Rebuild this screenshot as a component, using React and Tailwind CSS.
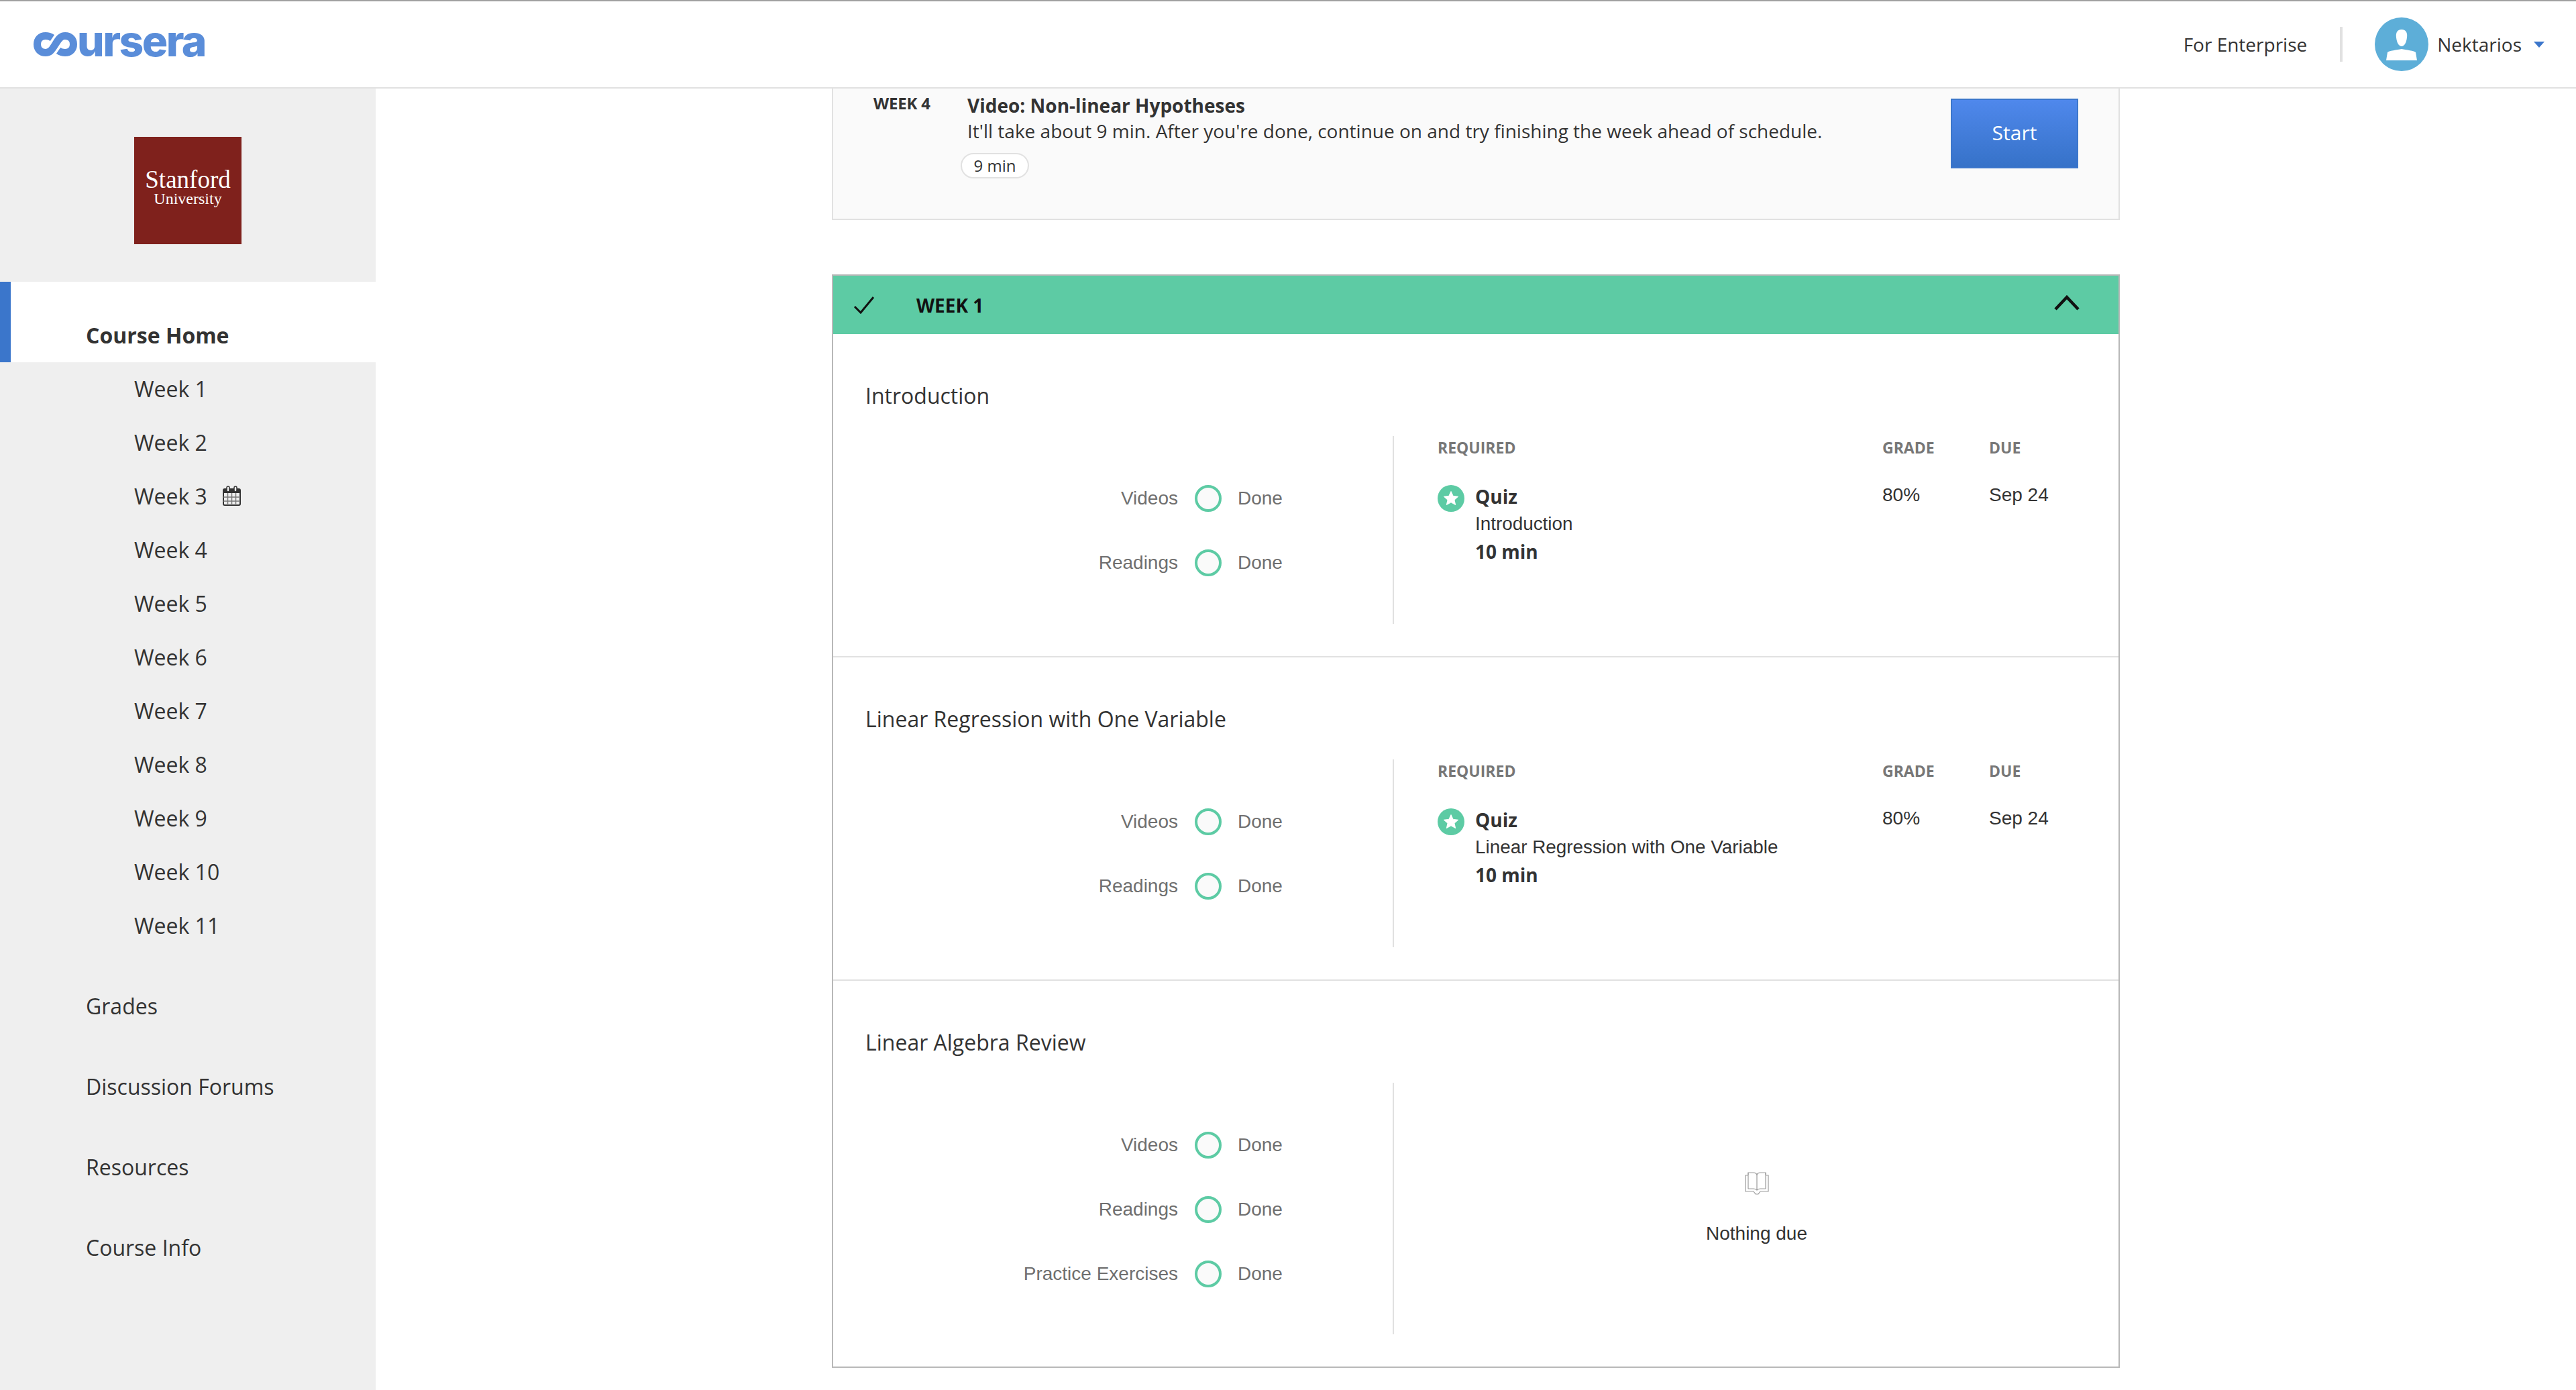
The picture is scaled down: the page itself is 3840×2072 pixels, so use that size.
import React from 'react';

const weeks = ['Week 1', 'Week 2', 'Week 3', 'Week 4', 'Week 5', 'Week 6', 'Week 7', 'Week 8', 'Week 9', 'Week 10', 'Week 11'];
const links = ['Grades', 'Discussion Forums', 'Resources', 'Course Info'];

function Logo() {
    return (
        <div className="flex items-center ml-[50px] h-[40px]">
            <svg width="65" height="36" viewBox="0 0 65 36" fill="none" className="shrink-0">
                <path
                    d="M28 8.5 C25 6.5 21 5.5 18 5.5 C10 5.5 5.5 11 5.5 18 C5.5 25 10 30.5 18 30.5 C24 30.5 27 27 32.5 18 C38 9 41 5.5 47 5.5 C55 5.5 59.5 11 59.5 18 C59.5 25 55 30.5 47 30.5 C44 30.5 40 29.5 37 27.5"
                    stroke="#5a8dd9"
                    strokeWidth="11"
                />
            </svg>
            <span className="font-['Inter',sans-serif] font-extrabold text-[64px] leading-[40px] tracking-[-2.5px] text-[#5a8dd9] -mt-[10px]">ursera</span>
        </div>
    );
}

function Avatar() {
    return (
        <svg width="80" height="80" viewBox="0 0 80 80" className="shrink-0">
            <circle cx="40" cy="40" r="40" fill="#5daed8" />
            <path d="M40 18 C46 18 49 22 48 30 C47 38 44 43 40 43 C36 43 33 38 32 30 C31 22 34 18 40 18 Z" fill="#fff" />
            <path d="M17 64 L19 52 C20 50 34 48 40 47 C46 48 60 50 61 52 L63 64 Z" fill="#fff" />
        </svg>
    );
}

function CalendarIcon() {
    return (
        <svg width="27" height="30" viewBox="0 0 27 30" className="ml-[23px] -mt-[2px]" fill="none">
            <rect x="1" y="5" width="25" height="24" rx="2" stroke="#333" strokeWidth="2" />
            <rect x="1" y="5" width="25" height="6" fill="#333" />
            <rect x="6" y="1" width="4" height="8" rx="2" fill="#efefef" stroke="#333" strokeWidth="1.5" />
            <rect x="17" y="1" width="4" height="8" rx="2" fill="#efefef" stroke="#333" strokeWidth="1.5" />
            <path d="M1 17 H26 M1 23 H26 M7.5 11 V29 M13.5 11 V29 M19.5 11 V29" stroke="#777" strokeWidth="1.5" />
        </svg>
    );
}

function StarBadge() {
    return (
        <svg width="40" height="40" viewBox="0 0 40 40" className="shrink-0">
            <circle cx="20" cy="20" r="20" fill="#5dcba4" />
            <path d="M20 9.5 L23.2 16.4 L30.6 17.2 L25 22.2 L26.6 29.5 L20 25.8 L13.4 29.5 L15 22.2 L9.4 17.2 L16.8 16.4 Z" fill="#fff" stroke="#fff" strokeWidth="1" strokeLinejoin="round" />
        </svg>
    );
}

function BookIcon() {
    return (
        <svg width="36" height="34" viewBox="0 0 36 34" fill="none" stroke="#9b9b9b" strokeWidth="1.2">
            <path d="M5 4 V1 H13 C15.5 1 17 2 18 4 C19 2 20.5 1 23 1 H31 V4" />
            <path d="M5 25 V1 M31 25 V1 M18 4 V27" />
            <path d="M5 25 H13 C15.5 25 17 26 18 27 C19 26 20.5 25 23 25 H31" />
            <path d="M5 5 H1 V29 H13 L16 33 H20 L23 29 H35 V5 H31" />
        </svg>
    );
}

function ProgressRow({ label }) {
    return (
        <div className="flex items-center h-[96px] font-['Liberation_Sans',sans-serif] text-[28px] text-[#6f6f6f]">
            <span className="w-[466px] text-right">{label}</span>
            <span className="ml-[25px] w-[40px] h-[40px] rounded-full border-4 border-[#5dcba4] bg-[#fafafa]"></span>
            <span className="ml-[24px]">Done</span>
        </div>
    );
}

function Section({ title, rows, quiz, last }) {
    return (
        <section className={`px-[48px] pt-[70px] pb-[48px] ${last ? '' : 'border-b-2 border-[#e1e1e1]'}`}>
            <h3 className="font-['Open_Sans',sans-serif] text-[32px] leading-[44px] text-[#333] mb-[38px]">{title}</h3>
            <div className={`flex ${last ? 'h-[375px]' : 'h-[280px]'}`}>
                <div className="w-[788px] pt-[45px] border-r-2 border-[#e1e1e1] shrink-0">
                    {rows.map((r) => <ProgressRow key={r} label={r} />)}
                </div>
                {quiz ? (
                    <div className="flex-1 pl-[65px]">
                        <div className="grid grid-cols-[663px_159px_1fr] font-['Open_Sans',sans-serif] font-bold text-[23px] leading-[34px] text-[#777]">
                            <span>REQUIRED</span>
                            <span>GRADE</span>
                            <span>DUE</span>
                        </div>
                        <div className="grid grid-cols-[663px_159px_1fr] mt-[36px] text-[#333]">
                            <div className="flex gap-[16px]">
                                <div className="mt-[3px]"><StarBadge /></div>
                                <div>
                                    <div className="font-['Open_Sans',sans-serif] font-bold text-[28px] leading-[40px]">Quiz</div>
                                    <div className="font-['Liberation_Sans',sans-serif] text-[27.85px] leading-[42px]">{quiz}</div>
                                    <div className="font-['Open_Sans',sans-serif] font-bold text-[28px] leading-[40px]">10 min</div>
                                </div>
                            </div>
                            <span className="font-['Liberation_Sans',sans-serif] text-[28px] leading-[40px] -mt-[2px]">80%</span>
                            <span className="font-['Liberation_Sans',sans-serif] text-[28px] leading-[40px] -mt-[2px]">Sep 24</span>
                        </div>
                    </div>
                ) : (
                    <div className="flex-1 flex flex-col items-center pt-[133px] pl-[49px]">
                        <BookIcon />
                        <div className="mt-[38px] font-['Liberation_Sans',sans-serif] text-[28px] leading-[40px] text-[#333]">Nothing due</div>
                    </div>
                )}
            </div>
        </section>
    );
}

export default function App() {
    return (
        <div className="w-[3840px] h-[2072px] overflow-hidden bg-white flex flex-col font-['Open_Sans',sans-serif] text-[#333]">
            <header className="h-[132px] shrink-0 flex items-center border-t-2 border-b-2 border-t-[#a0a0a0] border-b-[#e1e1e1] bg-white">
                <Logo />
                <div className="ml-auto flex items-center text-[28px]">
                    <span>For Enterprise</span>
                    <span className="ml-[49px] w-[4px] h-[52px] bg-[#e1e1e1]"></span>
                    <span className="ml-[48px]"><Avatar /></span>
                    <span className="ml-[13px]">Nektarios</span>
                    <span className="ml-[18px] mr-[47px] w-0 h-0 border-l-[8px] border-r-[8px] border-t-[9px] border-l-transparent border-r-transparent border-t-[#3b76cb]"></span>
                </div>
            </header>

            <div className="flex flex-1 min-h-0">
                <aside className="w-[560px] shrink-0 bg-[#efefef]">
                    <div className="h-[288px] flex justify-center pt-[72px]">
                        <div className="w-[160px] h-[160px] bg-[#7f211c] text-white text-center font-['Liberation_Serif',serif] pt-[44px]">
                            <div className="text-[37px] leading-[40px]">Stanford</div>
                            <div className="text-[24px] leading-[16px]">University</div>
                        </div>
                    </div>
                    <div className="h-[120px] bg-white border-l-[16px] border-[#3b76cb] pl-[112px] pt-[58px] text-[32px] leading-[44px] font-bold">Course Home</div>
                    {weeks.map((w) => (
                        <div key={w} className="h-[80px] flex items-center pl-[200px] text-[32px]">
                            {w}
                            {w === 'Week 3' && <CalendarIcon />}
                        </div>
                    ))}
                    <div className="mt-[20px]">
                        {links.map((l) => (
                            <div key={l} className="h-[120px] flex items-center pl-[128px] text-[32px]">{l}</div>
                        ))}
                    </div>
                </aside>

                <main className="flex-1 pl-[680px]">
                    <div className="w-[1920px]">
                        <div className="h-[196px] flex bg-[#fafafa] border-x-2 border-b-2 border-[#e1e1e1]">
                            <div className="w-[200px] pl-[60px] pt-[6px] text-[24px] leading-[32px] font-bold tracking-[-0.2px] shrink-0">WEEK 4</div>
                            <div className="pt-[6px]">
                                <div className="text-[28px] leading-[38px] font-bold">Video: Non-linear Hypotheses</div>
                                <div className="text-[28px] leading-[38px]">It'll take about 9 min. After you're done, continue on and try finishing the week ahead of schedule.</div>
                                <div className="-ml-[10px] mt-[14px] w-[102px] h-[38px] rounded-full border-2 border-[#e1e1e1] bg-white flex items-center justify-center text-[24px]">9 min</div>
                            </div>
                            <button className="ml-auto mr-[60px] mt-[15px] w-[190px] h-[104px] pb-[3px] shrink-0 border-2 border-[#3b76cb] bg-gradient-to-b from-[#4f88ec] to-[#3672c8] text-white text-[30px] font-medium">Start</button>
                        </div>

                        <div className="mt-[81px] border-2 border-[#b8b8b8]">
                            <div className="h-[87px] bg-[#5dcba4] flex items-center text-[#111]">
                                <svg width="32" height="26" viewBox="0 0 32 26" fill="none" stroke="#111" strokeWidth="3" className="ml-[30px]">
                                    <path d="M2 15 L11 24 L30 1" />
                                </svg>
                                <span className="ml-[62px] text-[28px] font-bold">WEEK 1</span>
                                <svg width="38" height="24" viewBox="0 0 38 24" fill="none" stroke="#111" strokeWidth="4.5" className="ml-auto mr-[58px] -mt-[8px]">
                                    <path d="M2 22 L19 4 L36 22" />
                                </svg>
                            </div>
                            <Section title="Introduction" rows={['Videos', 'Readings']} quiz="Introduction" />
                            <Section title="Linear Regression with One Variable" rows={['Videos', 'Readings']} quiz="Linear Regression with One Variable" />
                            <Section title="Linear Algebra Review" rows={['Videos', 'Readings', 'Practice Exercises']} last />
                        </div>
                    </div>
                </main>
            </div>
        </div>
    );
}
